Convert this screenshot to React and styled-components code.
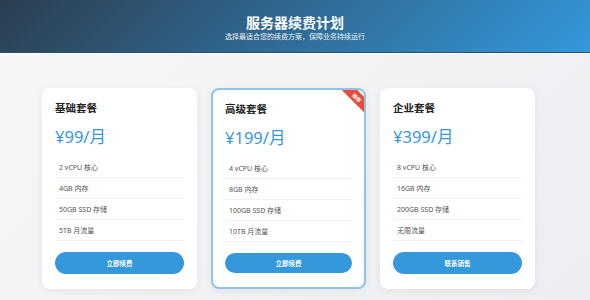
import React from "react";
import styled, { createGlobalStyle } from "styled-components";

const GlobalStyle = createGlobalStyle`
  * { box-sizing: border-box; }
  html, body { margin: 0; padding: 0; }
  body {
    font-family: "Noto Sans", "Noto Sans CJK SC", sans-serif;
    background: linear-gradient(135deg, #f6f7f9 0%, #eceef1 100%);
    min-height: 300px;
    color: #333;
  }
`;

const Page = styled.div`
  width: 590px;
  height: 300px;
  overflow: hidden;
`;

const Header = styled.header`
  height: 53px;
  background: linear-gradient(135deg, #2c3e50 0%, #3498db 100%);
  border-bottom: 1px solid #27506f;
  box-shadow: 0 1px 0 #ffffff;
  color: #fff;
  display: flex;
  flex-direction: column;
  align-items: center;
  justify-content: center;
  padding-top: 2px;
`;

const Title = styled.h1`
  margin: 0;
  font-family: "Noto Sans CJK SC", sans-serif;
  font-size: 14px;
  font-weight: 700;
  line-height: 18px;
`;

const Subtitle = styled.p`
  margin: 1px 0 0;
  font-family: "Noto Sans CJK SC", sans-serif;
  font-size: 7px;
  line-height: 9px;
  opacity: 0.9;
`;

const Plans = styled.main`
  display: grid;
  grid-template-columns: repeat(3, 155px);
  gap: 14px;
  padding: 35px 0 0 42px;
`;

const Card = styled.section`
  position: relative;
  overflow: hidden;
  background: #fff;
  border-radius: 8px;
  height: 201px;
  padding: ${(p) => (p.$featured ? "12px 12px 14px" : "13px 13px 15px")};
  box-shadow: 0 2px 10px rgba(0, 0, 0, 0.06);
  border: ${(p) => (p.$featured ? "2px solid #8ec4e8" : "none")};
  display: flex;
  flex-direction: column;
`;

const Ribbon = styled.div`
  position: absolute;
  top: 1.5px;
  right: -22.5px;
  width: 60px;
  height: 11px;
  background: #e74c3c;
  color: #fff;
  font-family: "Noto Sans CJK SC", sans-serif;
  font-size: 5px;
  font-weight: 700;
  line-height: 11px;
  text-align: center;
  transform: rotate(45deg);
`;

const PlanName = styled.h2`
  margin: 0;
  font-family: "Noto Sans CJK SC", sans-serif;
  font-size: 10.5px;
  font-weight: 700;
  line-height: 14px;
  color: #222;
`;

const Price = styled.div`
  margin-top: 10px;
  font-family: "Noto Sans", "Noto Sans CJK SC", sans-serif;
  font-size: 16.5px;
  line-height: 24px;
  color: #3498db;
`;

const Features = styled.ul`
  list-style: none;
  margin: 8px 0 0;
  padding: 0;
`;

const Feature = styled.li`
  height: 21px;
  padding-left: 4px;
  display: flex;
  align-items: center;
  font-family: "Noto Sans", "Noto Sans CJK SC", sans-serif;
  font-size: 7px;
  color: #555;
  border-bottom: 1px solid #f0f1f3;
`;

const Button = styled.button`
  margin-top: 11px;
  height: 22px;
  width: 100%;
  border: none;
  border-radius: 11px;
  background: #3498db;
  color: #fff;
  font-family: "Noto Sans CJK SC", sans-serif;
  font-size: 6.5px;
  font-weight: 700;
  cursor: pointer;
`;

const plans = [
  {
    name: "基础套餐",
    price: "¥99/月",
    features: ["2 vCPU 核心", "4GB 内存", "50GB SSD 存储", "5TB 月流量"],
    cta: "立即续费",
  },
  {
    name: "高级套餐",
    price: "¥199/月",
    features: ["4 vCPU 核心", "8GB 内存", "100GB SSD 存储", "10TB 月流量"],
    cta: "立即续费",
    featured: true,
  },
  {
    name: "企业套餐",
    price: "¥399/月",
    features: ["8 vCPU 核心", "16GB 内存", "200GB SSD 存储", "无限流量"],
    cta: "联系销售",
  },
];

export default function App() {
  return (
    <Page>
      <GlobalStyle />
      <Header>
        <Title>服务器续费计划</Title>
        <Subtitle>选择最适合您的续费方案，保障业务持续运行</Subtitle>
      </Header>
      <Plans>
        {plans.map((p) => (
          <Card key={p.name} $featured={p.featured}>
            {p.featured && <Ribbon>推荐</Ribbon>}
            <PlanName>{p.name}</PlanName>
            <Price>{p.price}</Price>
            <Features>
              {p.features.map((f) => (
                <Feature key={f}>{f}</Feature>
              ))}
            </Features>
            <Button>{p.cta}</Button>
          </Card>
        ))}
      </Plans>
    </Page>
  );
}
